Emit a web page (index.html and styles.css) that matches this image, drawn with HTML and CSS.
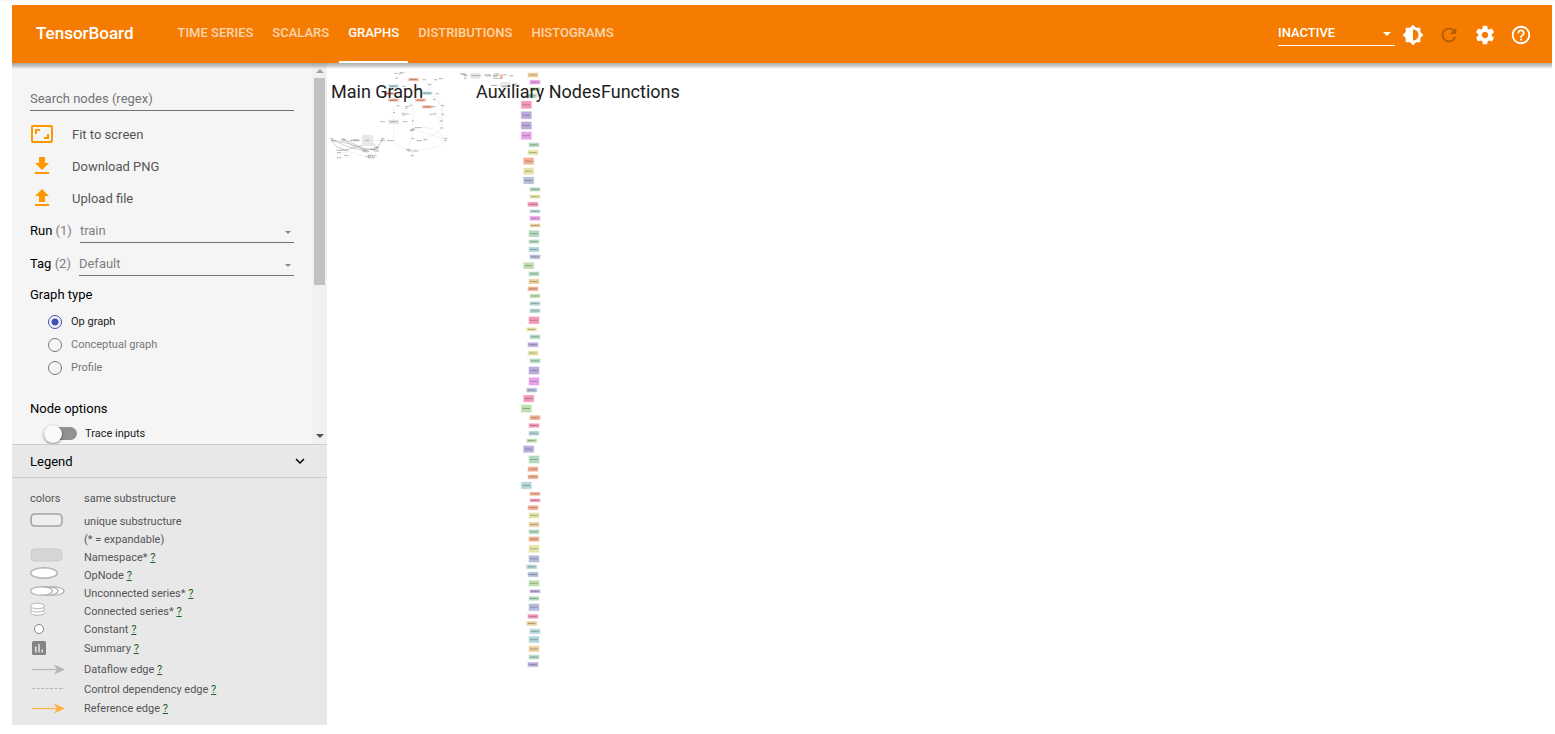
FILE: index.html
```html
<!DOCTYPE html>
<html lang="en">
<head>
<meta charset="utf-8">
<title>TensorBoard</title>
<link rel="stylesheet" href="styles.css">
</head>
<body>
<div class="app">
  <header class="toolbar">
    <h1 class="brand">TensorBoard</h1>
    <nav class="tabs" role="tablist">
      <button class="tab" role="tab" type="button">TIME SERIES</button>
      <button class="tab" role="tab" type="button">SCALARS</button>
      <button class="tab tab-active" role="tab" type="button" aria-selected="true">GRAPHS</button>
      <button class="tab" role="tab" type="button">DISTRIBUTIONS</button>
      <button class="tab" role="tab" type="button">HISTOGRAMS</button>
    </nav>
    <div class="plugin-field">
      <select class="plugin-select" aria-label="Inactive plugins"><option>INACTIVE</option></select>
      <svg class="plugin-arrow" viewBox="0 0 8 4" aria-hidden="true"><path d="M0 0h8L4 4z"/></svg>
    </div>
    <button class="icon-button" type="button" aria-label="Theme"><svg viewBox="0 0 24 24"><path d="M20 15.31L23.31 12 20 8.69V4h-4.69L12 .69 8.69 4H4v4.69L.69 12 4 15.31V20h4.69L12 23.31 15.31 20H20v-4.69zM12 18V6c3.31 0 6 2.69 6 6s-2.69 6-6 6z"/></svg></button>
    <button class="icon-button" type="button" aria-label="Reload" disabled><svg viewBox="0 0 24 24"><path d="M17.65 6.35C16.2 4.9 14.21 4 12 4c-4.42 0-7.99 3.58-7.99 8s3.57 8 7.99 8c3.73 0 6.84-2.55 7.73-6h-2.08c-.82 2.33-3.04 4-5.65 4-3.31 0-6-2.69-6-6s2.69-6 6-6c1.66 0 3.14.69 4.22 1.78L13 11h7V4l-2.35 2.35z"/></svg></button>
    <button class="icon-button" type="button" aria-label="Settings"><svg viewBox="0 0 24 24"><path d="M19.43 12.98c.04-.32.07-.64.07-.98s-.03-.66-.07-.98l2.11-1.65c.19-.15.24-.42.12-.64l-2-3.46c-.12-.22-.39-.3-.61-.22l-2.49 1c-.52-.4-1.08-.73-1.69-.98l-.38-2.65C14.46 2.18 14.25 2 14 2h-4c-.25 0-.46.18-.49.42l-.38 2.65c-.61.25-1.17.59-1.69.98l-2.49-1c-.23-.09-.49 0-.61.22l-2 3.46c-.13.22-.07.49.12.64l2.11 1.65c-.04.32-.07.65-.07.98s.03.66.07.98l-2.11 1.65c-.19.15-.24.42-.12.64l2 3.46c.12.22.39.3.61.22l2.49-1c.52.4 1.08.73 1.69.98l.38 2.65c.03.24.24.42.49.42h4c.25 0 .46-.18.49-.42l.38-2.65c.61-.25 1.17-.59 1.69-.98l2.49 1c.23.09.49 0 .61-.22l2-3.46c.12-.22.07-.49-.12-.64l-2.11-1.65zM12 15.5c-1.93 0-3.5-1.57-3.5-3.5s1.57-3.5 3.5-3.5 3.5 1.57 3.5 3.5-1.57 3.5-3.5 3.5z"/></svg></button>
    <button class="icon-button" type="button" aria-label="Help"><svg viewBox="0 0 24 24"><path d="M11 18h2v-2h-2v2zm1-16C6.48 2 2 6.48 2 12s4.48 10 10 10 10-4.48 10-10S17.52 2 12 2zm0 18c-4.41 0-8-3.59-8-8s3.59-8 8-8 8 3.59 8 8-3.59 8-8 8zm0-14c-2.21 0-4 1.79-4 4h2c0-1.1.9-2 2-2s2 .9 2 2c0 2-3 1.75-3 5h2c0-2.25 3-2.5 3-5 0-2.21-1.79-4-4-4z"/></svg></button>
  </header>

  <div class="dashboard">
    <aside class="sidebar">
      <div class="scroll-area">
        <form class="controls">
          <input class="search" type="text" placeholder="Search nodes (regex)" aria-label="Search nodes (regex)">
          <button class="action" type="button"><svg viewBox="0 0 24 24"><path d="M19 12h-2v3h-3v2h5v-5zM7 9h3V7H5v5h2V9zm14-6H3c-1.1 0-2 .9-2 2v14c0 1.1.9 2 2 2h18c1.1 0 2-.9 2-2V5c0-1.1-.9-2-2-2zm0 16.01H3V4.99h18v14.02z"/></svg>Fit to screen</button>
          <button class="action" type="button"><svg viewBox="0 0 24 24"><path d="M19 9h-4V3H9v6H5l7 7 7-7zM5 18v2h14v-2H5z"/></svg>Download PNG</button>
          <button class="action" type="button"><svg viewBox="0 0 24 24"><path d="M9 16h6v-6h4l-7-7-7 7h4zm-4 2h14v2H5z"/></svg>Upload file</button>
          <div class="picker">
            <label for="run">Run <span class="count">(1)</span></label>
            <div class="picker-field">
              <select id="run"><option>train</option></select>
              <svg class="picker-arrow" viewBox="0 0 6 3" aria-hidden="true"><path d="M0 0h6L3 3z"/></svg>
            </div>
          </div>
          <div class="picker">
            <label for="tag">Tag <span class="count">(2)</span></label>
            <div class="picker-field">
              <select id="tag"><option>Default</option></select>
              <svg class="picker-arrow" viewBox="0 0 6 3" aria-hidden="true"><path d="M0 0h6L3 3z"/></svg>
            </div>
          </div>
          <h2 class="group-title">Graph type</h2>
          <label class="radio radio-on"><input type="radio" name="type" checked>Op graph</label>
          <label class="radio"><input type="radio" name="type">Conceptual graph</label>
          <label class="radio"><input type="radio" name="type">Profile</label>
          <h2 class="group-title group-title-spaced">Node options</h2>
          <label class="toggle"><input type="checkbox">Trace inputs</label>
        </form>
        <div class="scrollbar" aria-hidden="true">
          <svg class="scroll-arrow scroll-arrow-up" viewBox="0 0 8 4"><path d="M0 4h8L4 0z"/></svg>
          <div class="thumb"></div>
          <svg class="scroll-arrow" viewBox="0 0 8 4"><path d="M0 0h8L4 4z"/></svg>
        </div>
      </div>
      <section class="legend">
        <button class="legend-header" type="button">Legend
          <svg viewBox="0 0 24 24"><path d="M7.41 8.59L12 13.17l4.59-4.58L18 10l-6 6-6-6 1.41-1.41z"/></svg>
        </button>
        <ul class="legend-list">
          <li class="legend-row legend-first"><span>colors</span><span>same substructure</span></li>
          <li class="legend-row"><svg viewBox="0 0 36 18"><rect x="1" y="2" width="31" height="12" rx="4" fill="#efefef" stroke="#a3a3a3" stroke-width="1.6"/></svg><span>unique substructure</span></li>
          <li class="legend-row"><span></span><span>(* = expandable)</span></li>
          <li class="legend-row"><svg viewBox="0 0 36 18"><rect x="1" y="1" width="31" height="12" rx="4" fill="#d6d6d6" stroke="#c9c9c9"/></svg><span>Namespace* <a href="#namespace">?</a></span></li>
          <li class="legend-row"><svg viewBox="0 0 36 18"><ellipse cx="14" cy="7" rx="13.5" ry="5.2" fill="#fff" stroke="#b0b0b0" stroke-width="1.4"/></svg><span>OpNode <a href="#opnode">?</a></span></li>
          <li class="legend-row"><svg viewBox="0 0 36 18"><g fill="#fff" stroke="#adadad" stroke-width="1.2"><ellipse cx="23" cy="7" rx="11" ry="4.2"/><ellipse cx="17" cy="7" rx="11" ry="4.2"/><ellipse cx="11.500" cy="7" rx="11" ry="4.2"/></g></svg><span>Unconnected series* <a href="#unconnected">?</a></span></li>
          <li class="legend-row"><svg viewBox="0 0 36 18"><g fill="#fff" stroke="#b5b5b5"><ellipse cx="7.500" cy="10.500" rx="7" ry="2.800"/><ellipse cx="7.500" cy="7.200" rx="7" ry="2.800"/><ellipse cx="7.500" cy="4" rx="7" ry="2.800"/></g></svg><span>Connected series* <a href="#connected">?</a></span></li>
          <li class="legend-row"><svg viewBox="0 0 36 18"><circle cx="9" cy="9" r="4.500" fill="#fff" stroke="#848484"/></svg><span>Constant <a href="#constant">?</a></span></li>
          <li class="legend-row legend-summary"><svg viewBox="0 0 36 20"><rect x="2" y="2.500" width="14" height="14" rx="1.500" fill="#848484"/><path d="M5.800 8v6M9 5.500V14M12.200 11v3" stroke="#e6e6e6" stroke-width="1.500"/></svg><span>Summary <a href="#summary">?</a></span></li>
          <li class="legend-row legend-tall"><svg viewBox="0 0 36 20"><path d="M2 10.500h26" stroke="#bbb" stroke-width="1.300"/><path d="M24 5.500l11 5-11 5 3-5z" fill="#b5b5b5"/></svg><span>Dataflow edge <a href="#dataflow">?</a></span></li>
          <li class="legend-row legend-tall"><svg viewBox="0 0 36 20"><path d="M2 9.500h32" stroke="#b5b5b5" stroke-dasharray="3 1.500"/></svg><span>Control dependency edge <a href="#control">?</a></span></li>
          <li class="legend-row"><svg viewBox="0 0 36 18"><path d="M2 9.500h26" stroke="#ffb74d" stroke-width="1.300"/><path d="M24 4.500l11 5-11 5 3-5z" fill="#ffb040"/></svg><span>Reference edge <a href="#reference">?</a></span></li>
        </ul>
      </section>
    </aside>

    <main class="graph">
      <svg class="scene" role="img" aria-label="Op graph">
        <g id="main" transform="translate(-2 -1) scale(.3333)">
          <g class="edge">
            <path d="M208 130Q200 150 206 174M206 184V230Q206 255 250 262M264 184Q264 220 250 262M280 197Q330 190 362 232Q350 262 262 266M264 202Q320 220 362 230M349 177Q356 120 330 100M351 198L354 131M213 50L231 32M316 67L340 52M316 67L307 90M316 67L280 55M330 96L327 112 352 131M264 179V130L247 110M207 76V110M219 131L250 150M301 233L351 202M351 198L349 177 320 150"/>
          </g>
          <g class="edge edge-thick">
            <path d="M20 234Q28 256 60 264M25 236Q70 240 120 262M55 231Q80 262 150 262M62 264Q100 252 112 250M140 242Q160 255 158 262M174 230Q165 244 155 262M55 231L130 266M20 230Q90 276 158 260"/>
          </g>
          <g class="edge"><path d="M64 266V282M64 266L117 282 138 284M117 266L140 282M158 260L146 286M25 236H110M145 235H197M262 268V284M250 264H275M42 265H64M42 272H64"/></g>
          <g class="box-gray"><rect x="112" y="220" width="32" height="31" rx="2"/><rect x="191" y="174" width="31" height="11" rx="2"/></g>
        </g>
        <g id="aux" transform="translate(123 -1) scale(.3333)">
          <g class="box-gray"><rect x="61" y="34" width="32" height="15" rx="5"/><rect x="151" y="61" width="31" height="16" rx="5"/></g>
          <path class="edge" d="M30 36L48 41 62 41M93 41H185M132 70H203M45 41V49"/>
          <rect class="c-orange" x="151" y="37" width="7" height="12"/>
        </g>
        <g id="functions" transform="translate(183 117) scale(.3333)"></g>
        <g class="titles">
          <text x="4" y="35">Main Graph</text>
          <text x="149" y="35">Auxiliary Nodes</text>
          <text x="274" y="35">Functions</text>
        </g>
      </svg>
    </main>
  </div>
</div>
<script src="graph.js"></script>
</body>
</html>
```

FILE: styles.css
```css
* {
  box-sizing: border-box;
}

body {
  margin: 0;
  border-top: 1px solid #f8f8f8;
  background: #fff;
  color: #212121;
  font-family: Roboto, "Liberation Sans", sans-serif;
  font-size: 13px;
}

button,
input,
select {
  margin: 0;
  padding: 0;
  border: 0;
  border-radius: 0;
  background: none;
  color: inherit;
  font: inherit;
}

.app {
  display: flex;
  flex-direction: column;
  height: calc(100vh - 1px);
  padding: 4px 3px 9px 12px;
}

/* Toolbar */
.toolbar {
  position: relative;
  z-index: 1;
  display: flex;
  flex: none;
  align-items: center;
  height: 58px;
  padding: 0 13px 0 24px;
  background: #f57c00;
  color: #fff;
}

.toolbar::after {
  content: "";
  position: absolute;
  top: 100%;
  left: 0;
  right: 0;
  height: 6px;
  background: linear-gradient(rgba(0, 0, 0, 0.32), rgba(0, 0, 0, 0.2) 50%, transparent);
}

.brand {
  margin: 0;
  padding-bottom: 2px;
  font-size: 17px;
  font-weight: 500;
}

.tabs {
  display: flex;
  gap: 1px;
  align-self: stretch;
  margin-left: 35px;
}

.tab {
  padding: 0 9px 3px;
  border-top: 2px solid transparent;
  border-bottom: 2px solid transparent;
  font-size: 13px;
  font-weight: 500;
  color: rgba(255, 255, 255, 0.7);
}

.tab-active {
  border-bottom-color: #fff;
  color: #fff;
}

.plugin-field {
  position: relative;
  width: 117px;
  margin-bottom: 2px;
  margin-left: auto;
  border-bottom: 1px solid #fff;
}

.plugin-select {
  width: 100%;
  height: 24px;
  appearance: none;
  font-weight: 500;
}

.plugin-arrow {
  position: absolute;
  top: 11px;
  right: 4px;
  width: 8px;
  height: 4px;
  fill: #fff;
}

.icon-button {
  display: grid;
  width: 36px;
  height: 36px;
  padding-top: 2px;
  place-items: center;
}

.icon-button svg {
  width: 22px;
  height: 22px;
  fill: #fff;
}

.icon-button:disabled svg {
  fill: rgba(0, 0, 0, 0.26);
}

/* Sidebar */
.dashboard {
  display: flex;
  flex: 1;
  min-height: 0;
}

.sidebar {
  display: flex;
  flex: none;
  flex-direction: column;
  width: 315px;
  background: #f5f5f5;
}

.scroll-area {
  display: flex;
  flex: 1;
  min-height: 0;
}

.controls {
  display: flex;
  flex: 1;
  flex-direction: column;
  padding: 24px 18px 0;
  overflow: hidden;
}

.controls > * {
  flex: none;
}

.search {
  height: 24px;
  margin-bottom: 7px;
  border-bottom: 1px solid #737373;
}

.search::placeholder {
  color: #737373;
}

.action {
  display: flex;
  align-items: center;
  gap: 18px;
  height: 32px;
  color: #555;
  text-align: left;
}

.action svg {
  width: 24px;
  height: 24px;
  fill: #ff9800;
}

.picker {
  display: flex;
  align-items: center;
  gap: 8px;
  height: 33px;
  color: #000;
}

.count {
  color: #808080;
}

.picker-field {
  position: relative;
  flex: 1;
}

.picker-field select {
  width: 100%;
  height: 24px;
  border-bottom: 1px solid #737373;
  appearance: none;
  color: #808080;
}

.picker-arrow {
  position: absolute;
  top: 12px;
  right: 3px;
  width: 6px;
  height: 3px;
  fill: #8a8a8a;
}

.group-title {
  margin: 0;
  color: #000;
  font-size: 13px;
  font-weight: 400;
  line-height: 30px;
}

.group-title-spaced {
  margin-top: 15px;
}

.radio {
  display: flex;
  align-items: center;
  gap: 9px;
  height: 23px;
  padding-left: 18px;
  color: #777;
  font-size: 11px;
}

.radio-on {
  color: #212121;
}

.radio input {
  width: 14px;
  height: 14px;
  border: 1px solid #777;
  border-radius: 50%;
  appearance: none;
}

.radio input:checked {
  border-color: #3f51b5;
  background: radial-gradient(circle, #3f51b5 3px, transparent 4px);
}

.toggle {
  display: flex;
  align-items: center;
  gap: 8px;
  height: 18px;
  padding-left: 17px;
  font-size: 11px;
}

.toggle input {
  position: relative;
  width: 30px;
  height: 13px;
  border-radius: 7px;
  background: #919191;
  appearance: none;
}

.toggle input::before {
  content: "";
  position: absolute;
  top: -2px;
  left: -3px;
  width: 18px;
  height: 18px;
  border-radius: 50%;
  background: #fafafa;
  box-shadow: 0 1px 3px rgba(0, 0, 0, 0.5);
}

.scrollbar {
  display: flex;
  flex-direction: column;
  align-items: center;
  width: 15px;
  padding: 6px 0;
  background: #f1f1f1;
}

.scroll-arrow {
  width: 8px;
  height: 4px;
  margin-top: auto;
  fill: #505050;
}

.scroll-arrow-up {
  margin: 0 0 5px;
  fill: #a3a3a3;
}

.thumb {
  width: 11px;
  height: 56%;
  background: #c1c1c1;
}

/* Legend */
.legend {
  flex: none;
  border-top: 1px solid #ccc;
  background: #e8e8e8;
}

.legend-header {
  display: flex;
  align-items: center;
  justify-content: space-between;
  width: 100%;
  height: 33px;
  padding: 0 18px;
  border-bottom: 1px solid #ccc;
  color: #000;
}

.legend-header svg {
  width: 18px;
  height: 18px;
}

.legend-list {
  margin: 0;
  padding: 7px 18px 8px;
  list-style: none;
  color: #555;
  font-size: 11px;
}

.legend-row {
  display: grid;
  grid-template-columns: 36px 1fr;
  column-gap: 18px;
  align-items: center;
  height: 18px;
}

.legend-row svg {
  width: 36px;
  height: 100%;
}

.legend-first {
  height: 27px;
}

.legend-tall {
  height: 20px;
}

.legend-summary {
  height: 21px;
}

.legend-row a {
  color: #1b5e20;
}

/* Graph canvas */
.graph {
  flex: 1;
  min-width: 0;
}

.scene {
  display: block;
  width: 100%;
  height: 100%;
}

.titles {
  fill: #212121;
  font-size: 18px;
}

.edge {
  fill: none;
  stroke: #d8d8d8;
  stroke-width: 1;
}

.edge-thick {
  stroke: #b4b4b4;
  stroke-width: 2;
}

.label {
  fill: none;
  stroke: #444;
  stroke-width: 2;
  stroke-dasharray: 5 1 3 1;
  opacity: 0.7;
}

.box-gray {
  fill: #e8e8e8;
  stroke: #dcdcdc;
}

.halo {
  opacity: 0.4;
}

.c-pink { fill: #f19ab7; }
.c-purple { fill: #bbabdd; }
.c-magenta { fill: #e8a3e8; }
.c-green { fill: #b3d9c0; }
.c-lime { fill: #c0dfb0; }
.c-yellow { fill: #e5e5a8; }
.c-tan { fill: #eccf9d; }
.c-orange { fill: #f2b094; }
.c-teal { fill: #b3d6d9; }
.c-blue { fill: #b3bcd8; }
```

FILE: graph.js
```js
const SVG = 'http://www.w3.org/2000/svg';

function add(parent, tag, attrs) {
  const el = document.createElementNS(SVG, tag);
  for (const key in attrs) el.setAttribute(key, attrs[key]);
  parent.appendChild(el);
}

function label(parent, x, y, width) {
  add(parent, 'path', { class: 'label', d: `M${x - width / 2} ${y}h${width}` });
}

function node(parent, x, y, width, height, color) {
  add(parent, 'rect', { class: `halo c-${color}`, x: x - 2, y: y - 2, width: width + 4, height: height + 4, rx: 2 });
  add(parent, 'rect', { class: `c-${color}`, x, y, width, height, rx: 1 });
  label(parent, x + width / 2, y + height / 2, width - 8);
}

const main = document.getElementById('main');
[
  [251, 49, 'orange'], [191, 69, 'teal'], [179, 91, 'orange'], [191, 111, 'orange'],
  [272, 111, 'orange'], [292, 131, 'orange'], [292, 90, 'teal'],
].forEach(([x, y, color]) => node(main, x, y, 29, 7, color));

// Each entry: centre x, centre y, width.
[
  [213, 34, 9], [231, 32, 13], [225, 35, 8], [215, 49, 8], [298, 53, 9], [349, 50, 13], [332, 53, 8],
  [314, 68, 11], [237, 73, 10], [337, 95, 9], [329, 112, 8], [219, 131, 8], [247, 134, 12], [258, 130, 8],
  [245, 139, 6], [327, 134, 11], [354, 131, 10], [208, 152, 6], [235, 154, 9], [247, 156, 11], [237, 159, 9],
  [320, 157, 12], [331, 155, 8], [354, 157, 8], [206, 179, 23], [173, 179, 13], [240, 179, 14], [264, 177, 7],
  [349, 177, 10], [280, 197, 20], [266, 201, 8], [262, 203, 12], [261, 206, 9], [351, 198, 10], [264, 230, 10],
  [283, 236, 16], [301, 233, 12], [362, 230, 9], [362, 236, 7], [92, 233, 17], [90, 236, 28], [20, 230, 8],
  [55, 231, 12], [25, 236, 12], [55, 236, 9], [174, 230, 10], [172, 236, 13], [197, 236, 20], [127, 235, 12],
  [250, 263, 14], [272, 267, 14], [254, 267, 12], [262, 281, 9], [42, 265, 14], [60, 264, 20], [42, 272, 12],
  [42, 287, 13], [64, 281, 13], [117, 265, 14], [123, 269, 20], [145, 262, 17], [155, 256, 16], [154, 267, 15],
  [137, 280, 16], [130, 284, 14], [148, 282, 13], [140, 287, 20],
].forEach(([x, y, width]) => label(main, x, y, width));

const aux = document.getElementById('aux');
[
  [38, 35, 16], [44, 38, 14], [46, 41, 8], [46, 49, 8], [77, 41, 24], [113, 38, 18], [115, 42, 15],
  [140, 36, 15], [138, 40, 20], [136, 44, 10], [144, 49, 27], [165, 38, 9], [185, 41, 11],
  [132, 70, 18], [167, 73, 22], [195, 66, 9], [199, 70, 18], [205, 73, 10],
].forEach(([x, y, width]) => label(aux, x, y, width));

// Function nodes, top to bottom: x, top, bottom, colour.
const functions = document.getElementById('functions');
[
  [54, -321, -309, 'tan'], [60, -299, -288, 'magenta'], [60, -277, -267, 'lime'], [50, -258, -247, 'green'],
  [34, -236, -215, 'pink'], [34, -205, -184, 'purple'], [34, -174, -153, 'purple'], [34, -144, -122, 'magenta'],
  [57, -111, -100, 'green'], [54, -89, -76, 'yellow'], [41, -66, -47, 'orange'], [41, -36, -17, 'yellow'],
  [41, -8, 11, 'blue'], [60, 23, 33, 'green'], [60, 45, 55, 'yellow'], [54, 67, 79, 'pink'],
  [60, 90, 98, 'teal'], [60, 109, 121, 'magenta'], [60, 132, 141, 'tan'], [57, 152, 170, 'green'],
  [57, 180, 190, 'green'], [57, 202, 215, 'teal'], [60, 225, 236, 'blue'], [41, 248, 266, 'lime'],
  [57, 276, 287, 'green'], [57, 298, 311, 'tan'], [54, 321, 332, 'orange'], [60, 343, 353, 'lime'],
  [60, 365, 376, 'teal'], [60, 387, 398, 'teal'], [57, 411, 431, 'pink'], [50, 443, 453, 'yellow'],
  [60, 465, 476, 'green'], [54, 488, 500, 'purple'], [54, 513, 526, 'yellow'], [60, 537, 548, 'green'],
  [57, 561, 582, 'purple'], [57, 593, 615, 'magenta'], [50, 625, 636, 'blue'], [41, 646, 665, 'pink'],
  [34, 675, 696, 'lime'], [60, 707, 719, 'orange'], [57, 731, 742, 'pink'], [57, 754, 766, 'teal'],
  [50, 777, 787, 'lime'], [41, 798, 817, 'purple'], [57, 828, 849, 'green'], [54, 861, 874, 'orange'],
  [54, 885, 896, 'orange'], [34, 907, 926, 'teal'], [60, 937, 946, 'orange'], [60, 957, 965, 'pink'],
  [54, 977, 989, 'orange'], [57, 999, 1014, 'yellow'], [57, 1027, 1040, 'tan'], [57, 1050, 1061, 'green'],
  [57, 1071, 1084, 'orange'], [57, 1096, 1117, 'yellow'], [57, 1127, 1146, 'blue'], [50, 1155, 1166, 'teal'],
  [54, 1177, 1190, 'blue'], [57, 1202, 1218, 'lime'], [60, 1230, 1238, 'purple'], [57, 1250, 1261, 'green'],
  [57, 1272, 1292, 'blue'], [54, 1304, 1315, 'pink'], [50, 1325, 1336, 'tan'], [60, 1348, 1361, 'teal'],
  [57, 1370, 1388, 'teal'], [57, 1399, 1415, 'tan'], [57, 1426, 1437, 'green'], [54, 1448, 1460, 'purple'],
].forEach(([x, top, bottom, color]) => node(functions, x, top, 30, bottom - top, color));
```
